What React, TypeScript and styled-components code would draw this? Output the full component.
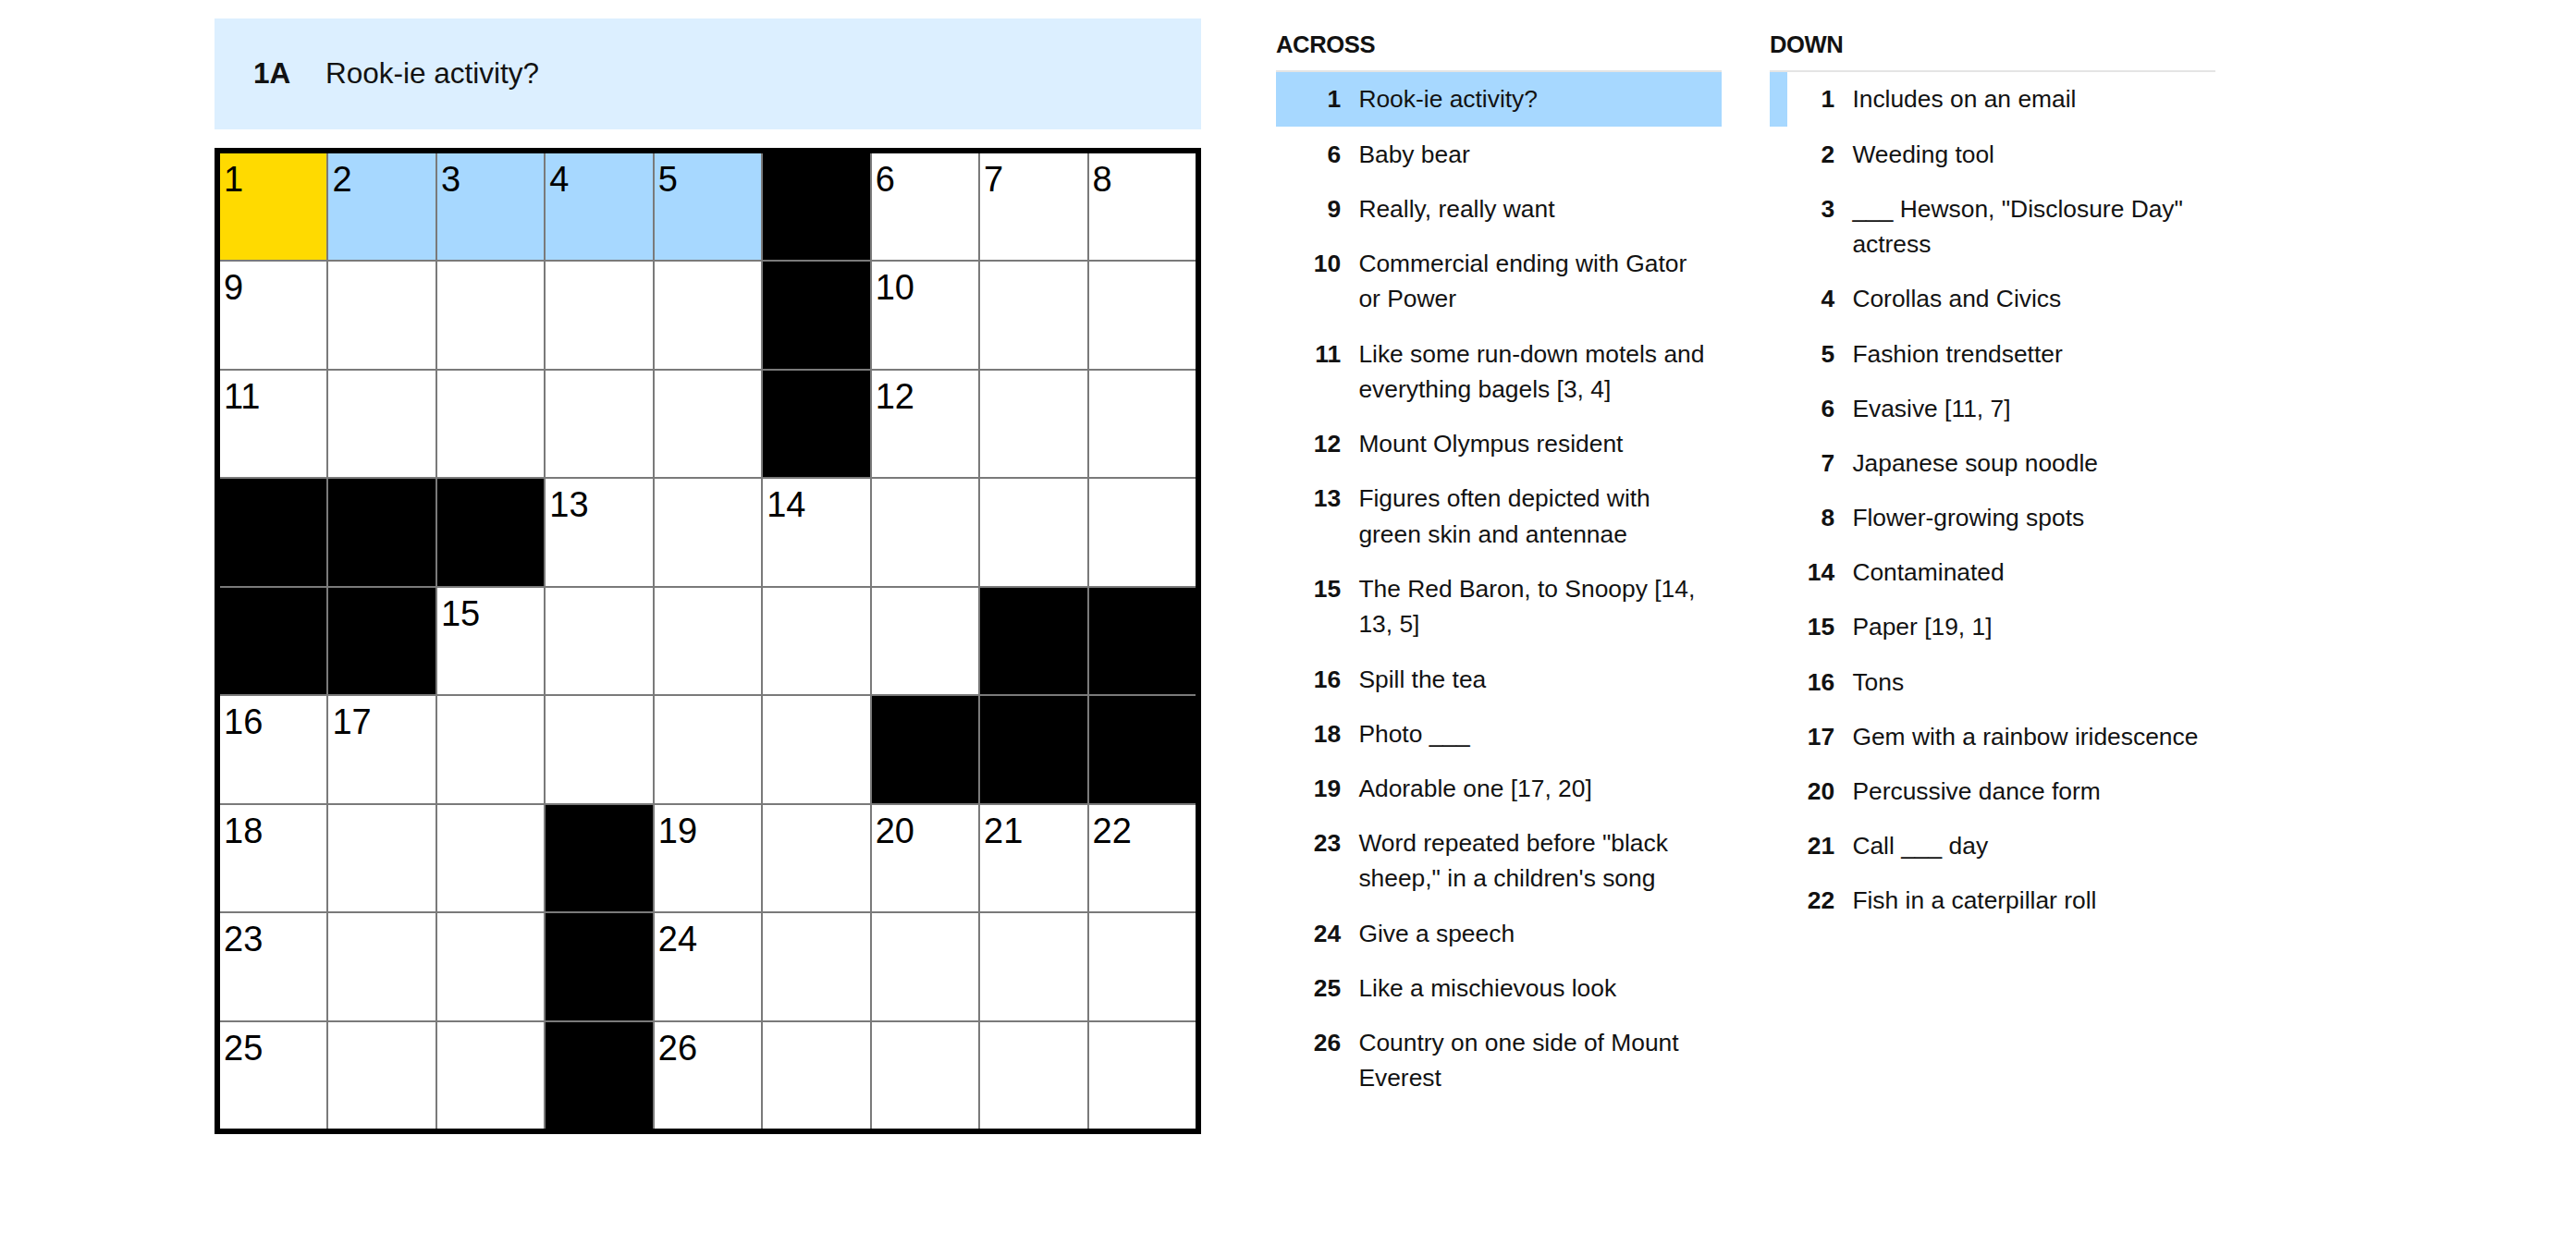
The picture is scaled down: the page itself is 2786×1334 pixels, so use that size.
import React from "react";
import styled, { createGlobalStyle } from "styled-components";

const GlobalStyle = createGlobalStyle`
  html, body {
    margin: 0;
    padding: 0;
    background: #ffffff;
  }
  body {
    font-family: "Liberation Sans", Arial, Helvetica, sans-serif;
    color: #121212;
  }
  *, *::before, *::after {
    box-sizing: border-box;
  }
`;

type CellState = "block" | "open" | "word" | "focus";

const Page = styled.main`
  display: flex;
  align-items: flex-start;
  gap: 81px;
  padding: 20px 0 0 232px;
`;

const BoardColumn = styled.div`
  display: flex;
  flex-direction: column;
  gap: 20px;
  width: 1067px;
  flex-shrink: 0;
`;

const ClueBar = styled.div`
  display: flex;
  align-items: center;
  height: 120px;
  padding-left: 42px;
  background: #dcefff;
  font-size: 31.5px;
  line-height: 1.25;
`;

const ClueBarLabel = styled.span`
  width: 78px;
  flex-shrink: 0;
  font-weight: 700;
`;

const ClueBarText = styled.span`
  font-weight: 400;
`;

const Board = styled.div`
  display: grid;
  grid-template-columns: repeat(9, 1fr);
  grid-template-rows: repeat(9, 1fr);
  gap: 2px;
  width: 1067px;
  height: 1067px;
  border: 6px solid #000000;
  background: #7a7a7a;
`;

const cellFill: Record<CellState, string> = {
  block: "#000000",
  open: "#ffffff",
  word: "#a7d8ff",
  focus: "#ffda00",
};

const Cell = styled.div<{ $state: CellState }>`
  background: ${(p) => cellFill[p.$state]};
  overflow: hidden;
`;

const CellNumber = styled.span`
  display: block;
  padding: 9px 0 0 4px;
  font-family: "Liberation Sans", Arial, sans-serif;
  font-size: 38px;
  line-height: 1;
  color: #000000;
`;

const Lists = styled.div`
  display: flex;
  gap: 52px;
  margin-top: 8.6px;
`;

const ClueSection = styled.section`
  width: 482px;
  flex-shrink: 0;
`;

const SectionTitle = styled.h3`
  margin: 0;
  padding-bottom: 9px;
  border-bottom: 2.4px solid #e4e4e4;
  font-size: 25.6px;
  line-height: 38.4px;
  font-weight: 700;
  letter-spacing: -0.4px;
  text-transform: uppercase;
`;

const ClueList = styled.ol`
  list-style: none;
  margin: 0;
  padding: 0;
`;

const ClueRow = styled.li<{ $active?: boolean; $linked?: boolean }>`
  display: flex;
  padding: 10.4px 12.4px 10.4px 0;
  border-left: 19.2px solid ${(p) => (p.$linked ? "#a7d8ff" : "transparent")};
  background: ${(p) => (p.$active ? "#a7d8ff" : "transparent")};
  font-size: 26.4px;
  line-height: 38.4px;
`;

const ClueNum = styled.span`
  width: 51.2px;
  flex-shrink: 0;
  margin-right: 19.2px;
  text-align: right;
  font-weight: 700;
`;

const ClueText = styled.span`
  flex: 1;
  min-width: 0;
`;

// "#" is a block square; digits mark numbered squares; "." is an open square.
const layout: string[][] = [
  ["1", "2", "3", "4", "5", "#", "6", "7", "8"],
  ["9", ".", ".", ".", ".", "#", "10", ".", "."],
  ["11", ".", ".", ".", ".", "#", "12", ".", "."],
  ["#", "#", "#", "13", ".", "14", ".", ".", "."],
  ["#", "#", "15", ".", ".", ".", ".", "#", "#"],
  ["16", "17", ".", ".", ".", ".", "#", "#", "#"],
  ["18", ".", ".", "#", "19", ".", "20", "21", "22"],
  ["23", ".", ".", "#", "24", ".", ".", ".", "."],
  ["25", ".", ".", "#", "26", ".", ".", ".", "."],
];

const across: [number, string][] = [
  [1, "Rook-ie activity?"],
  [6, "Baby bear"],
  [9, "Really, really want"],
  [10, "Commercial ending with Gator or Power"],
  [11, "Like some run-down motels and everything bagels [3, 4]"],
  [12, "Mount Olympus resident"],
  [13, "Figures often depicted with green skin and antennae"],
  [15, "The Red Baron, to Snoopy [14, 13, 5]"],
  [16, "Spill the tea"],
  [18, "Photo ___"],
  [19, "Adorable one [17, 20]"],
  [23, "Word repeated before \"black sheep,\" in a children's song"],
  [24, "Give a speech"],
  [25, "Like a mischievous look"],
  [26, "Country on one side of Mount Everest"],
];

const down: [number, string][] = [
  [1, "Includes on an email"],
  [2, "Weeding tool"],
  [3, "___ Hewson, \"Disclosure Day\" actress"],
  [4, "Corollas and Civics"],
  [5, "Fashion trendsetter"],
  [6, "Evasive [11, 7]"],
  [7, "Japanese soup noodle"],
  [8, "Flower-growing spots"],
  [14, "Contaminated"],
  [15, "Paper [19, 1]"],
  [16, "Tons"],
  [17, "Gem with a rainbow iridescence"],
  [20, "Percussive dance form"],
  [21, "Call ___ day"],
  [22, "Fish in a caterpillar roll"],
];

function stateFor(row: number, col: number, value: string): CellState {
  if (value === "#") return "block";
  if (row === 0 && col === 0) return "focus";
  if (row === 0 && col <= 4) return "word";
  return "open";
}

export default function App() {
  return (
    <>
      <GlobalStyle />
      <Page>
        <BoardColumn>
          <ClueBar>
            <ClueBarLabel>1A</ClueBarLabel>
            <ClueBarText>Rook-ie activity?</ClueBarText>
          </ClueBar>
          <Board>
            {layout.map((cells, r) =>
              cells.map((value, c) => (
                <Cell key={`${r}-${c}`} $state={stateFor(r, c, value)}>
                  {/^\d+$/.test(value) && <CellNumber>{value}</CellNumber>}
                </Cell>
              ))
            )}
          </Board>
        </BoardColumn>
        <Lists>
          <ClueSection>
            <SectionTitle>Across</SectionTitle>
            <ClueList>
              {across.map(([n, text]) => (
                <ClueRow key={n} $active={n === 1}>
                  <ClueNum>{n}</ClueNum>
                  <ClueText>{text}</ClueText>
                </ClueRow>
              ))}
            </ClueList>
          </ClueSection>
          <ClueSection>
            <SectionTitle>Down</SectionTitle>
            <ClueList>
              {down.map(([n, text]) => (
                <ClueRow key={n} $linked={n === 1}>
                  <ClueNum>{n}</ClueNum>
                  <ClueText>{text}</ClueText>
                </ClueRow>
              ))}
            </ClueList>
          </ClueSection>
        </Lists>
      </Page>
    </>
  );
}
